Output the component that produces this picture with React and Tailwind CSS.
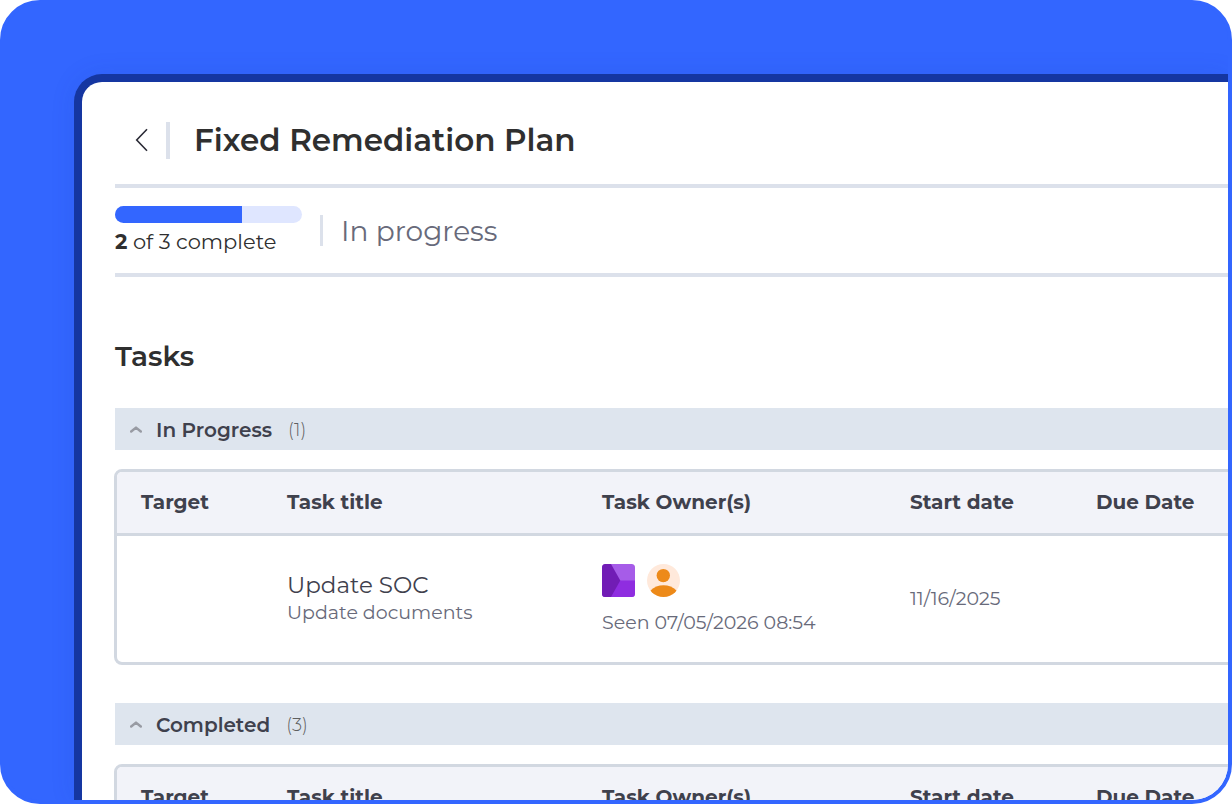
import React from "react";

const columns = ["Target", "Task title", "Task Owner(s)", "Start date", "Due Date"];

function SectionBar({ title, count }) {
  return (
    <button
      type="button"
      aria-expanded="true"
      className="flex h-[42px] w-full items-center bg-[#dee5ee] pt-0.5 pl-[15px] text-left"
    >
      <svg width="12" height="8" viewBox="0 0 12 8" fill="none" aria-hidden="true">
        <path d="M1.200 5.500L6 1.600L10.800 5.500" stroke="#989ba3" strokeWidth="2.500" strokeLinecap="round" strokeLinejoin="round" />
      </svg>
      <span className="ml-[14px] text-[20px] leading-7 font-semibold text-[#3f414d]">{title}</span>
      <span className="ml-4 text-[18px] leading-7 font-light text-[#5f5f5f]">({count})</span>
    </button>
  );
}

function OrgIcon() {
  return (
    <svg width="33" height="33" viewBox="0 0 33 33" role="img" aria-label="Team">
      <defs>
        <clipPath id="org-tile">
          <rect width="33" height="33" rx="3.5" />
        </clipPath>
      </defs>
      <g clipPath="url(#org-tile)">
        <rect width="33" height="33" fill="#a65ce8" />
        <path d="M0 16.5H33V33H0Z" fill="#8f2de0" />
        <path d="M0 0H9L18.3 16.5L9 33H0Z" fill="#711cb5" />
      </g>
    </svg>
  );
}

function PersonIcon() {
  return (
    <svg width="33" height="33" viewBox="0 0 33 33" role="img" aria-label="Owner">
      <defs>
        <clipPath id="person-disc">
          <circle cx="16.5" cy="16.5" r="16.5" />
        </clipPath>
      </defs>
      <g clipPath="url(#person-disc)">
        <rect width="33" height="33" fill="#ffe9db" />
        <circle cx="16.3" cy="11.6" r="6.7" fill="#ed8a19" />
        <path d="M3.5 26.6C7 23 11.500 21.200 16.500 21.200S26 23 29.500 26.600V33H3.500Z" fill="#ed8a19" />
      </g>
    </svg>
  );
}

function TaskTable({ label, rows }) {
  return (
    <div className="-mr-4 -ml-px overflow-hidden rounded-lg border-3 border-[#d2d8e1]">
      <table aria-label={label} className="w-full table-fixed border-collapse text-left">
        <colgroup>
          <col className="w-[146px]" />
          <col className="w-[315px]" />
          <col className="w-[308px]" />
          <col className="w-[186px]" />
          <col />
        </colgroup>
        <thead className="bg-[#f2f3f9]">
          <tr className="h-[62px] border-b-3 border-[#d2d8e1]">
            {columns.map((c) => (
              <th key={c} scope="col" className="pl-6 text-[20px] leading-7 font-bold whitespace-nowrap text-[#3f414d]">
                {c}
              </th>
            ))}
          </tr>
        </thead>
        <tbody>
          {rows.map((r) => (
            <tr key={r.title} className="h-32 text-[19px] leading-7 text-[#686a7a]">
              <td className="pl-6" />
              <td className="pl-6">
                <div className="text-[23px] text-[#3f414d]">{r.title}</div>
                <div>{r.detail}</div>
              </td>
              <td className="pt-1 pl-6">
                <div className="flex gap-3">
                  <OrgIcon />
                  <PersonIcon />
                </div>
                <div className="mt-3 whitespace-nowrap">{r.seen}</div>
              </td>
              <td className="pl-6">{r.start}</td>
              <td className="pl-6" />
            </tr>
          ))}
        </tbody>
      </table>
    </div>
  );
}

const inProgress = [
  { title: "Update SOC", detail: "Update documents", seen: "Seen 07/05/2026 08:54", start: "11/16/2025" },
];

export default function App() {
  return (
    <div className="h-screen bg-white font-['Montserrat','Inter',sans-serif]">
      <div className="flex h-full flex-col overflow-hidden rounded-[40px] border-4 border-[#3366ff] bg-[#3366ff] pt-[70px] pl-[70px]">
        <main className="min-h-0 flex-1 overflow-hidden rounded-tl-[28px] border-t-8 border-l-8 border-[#1536a1] bg-white pl-[33px] shadow-[0_0_24px_rgba(21,54,161,0.12)]">
          <header className="flex h-[106px] items-center border-b-4 border-[#dce1eb] pt-3.5 pl-5">
            <button type="button" aria-label="Back" className="flex h-[37px] items-center">
              <svg width="13" height="24" viewBox="0 0 13 24" fill="none" aria-hidden="true">
                <path d="M12 1.300L1.700 12L12 22.700" stroke="#2b2b36" strokeWidth="1.600" />
              </svg>
            </button>
            <div className="ml-[18px] h-[37px] w-1 bg-[#dce1eb]" />
            <h1 className="ml-6 text-[31px] leading-10 font-semibold text-[#2f2f2f]">Fixed Remediation Plan</h1>
          </header>

          <section className="flex h-[89px] items-center border-b-4 border-[#dce1eb]">
            <div className="w-[187px]">
              <div
                role="progressbar"
                aria-label="Tasks complete"
                aria-valuenow={2}
                aria-valuemin={0}
                aria-valuemax={3}
                className="h-[17px] overflow-hidden rounded-full bg-[#dfe6ff]"
              >
                <div className="h-full w-[68%] bg-[#3366ff]" />
              </div>
              <p className="mt-[5px] text-[21px] leading-7 whitespace-nowrap text-[#2f2f2f]">
                <b>2</b> of 3 complete
              </p>
            </div>
            <div className="ml-[18px] h-[31px] w-[3px] bg-[#dce1eb]" />
            <p className="ml-[18px] text-[28px] leading-9 text-[#686a7a]">In progress</p>
          </section>

          <h2 className="mt-[59px] text-[28px] leading-10 font-semibold text-[#2f2f2f]">Tasks</h2>

          <section className="mt-8 flex flex-col gap-[19px]">
            <SectionBar title="In Progress" count={1} />
            <TaskTable label="In Progress" rows={inProgress} />
          </section>
          <section className="mt-[38px] flex flex-col gap-[19px]">
            <SectionBar title="Completed" count={3} />
            <TaskTable label="Completed" rows={[]} />
          </section>
        </main>
      </div>
    </div>
  );
}
